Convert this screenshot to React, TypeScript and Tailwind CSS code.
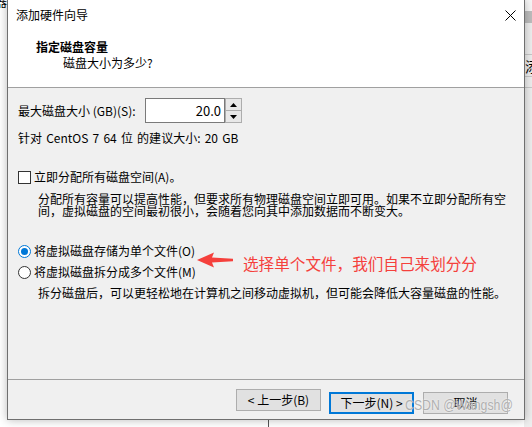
import React from 'react';

const FONT = "font-['Noto_Sans_CJK_SC','Noto_Sans_CJK_JP',sans-serif]";

function Radio({ checked }: { checked?: boolean }) {
  return (
    <span
      className={`flex items-center justify-center w-[13px] h-[13px] rounded-full border bg-white ${
        checked ? 'border-[#0078d7]' : 'border-[#333333]'
      }`}
    >
      {checked && <span className="block w-[7px] h-[7px] rounded-full bg-[#0078d7]" />}
    </span>
  );
}

function Arrow() {
  return (
    <svg width="37" height="16" viewBox="0 0 37 16">
      <polygon points="0,8 17,0.5 15,5.5 36,6.8 36,9.2 15,10.5 17,15.5" fill="#f5403c" />
    </svg>
  );
}

function Spinner() {
  return (
    <div className="flex flex-col w-[17px] h-[25px] border border-[#adadad] bg-[#e8e8e8]">
      <div className="flex-1 flex items-center justify-center border-b border-[#adadad]">
        <svg width="7" height="4" viewBox="0 0 7 4">
          <polygon points="0,4 3.5,0 7,4" fill="#000" />
        </svg>
      </div>
      <div className="flex-1 flex items-center justify-center">
        <svg width="7" height="4" viewBox="0 0 7 4">
          <polygon points="0,0 7,0 3.5,4" fill="#000" />
        </svg>
      </div>
    </div>
  );
}

function WizardButton({ label, focused }: { label: string; focused?: boolean }) {
  return (
    <button
      className={`w-[85px] h-[22px] bg-[#e1e1e1] text-[12px] leading-none text-black ${
        focused ? 'border-2 border-[#0078d7]' : 'border border-[#adadad]'
      }`}
    >
      {label}
    </button>
  );
}

export default function App() {
  return (
    <div className={`relative w-[532px] h-[427px] overflow-hidden bg-white ${FONT}`}>
      {/* background app behind the dialog */}
      <span className="absolute left-[-5px] top-[-4px] text-[12px] leading-none text-black">器</span>
      <div className="absolute left-[524px] top-0 w-[8px] h-[427px] bg-[#eeeeee] flex flex-col">
        <div className="h-[11px] bg-[#f7f7f7]" />
        <div className="h-[12px] bg-[#bdbdbd]" />
        <div className="h-[31px]" />
        <div className="h-px bg-[#c8c8c8]" />
        <div className="h-[21px] flex items-center overflow-hidden">
          <span className="text-[14px] leading-none text-black pl-[1px]">添</span>
        </div>
        <div className="h-px bg-[#c8c8c8]" />
        <div className="h-[10px]" />
        <div className="h-px bg-[#c8c8c8]" />
      </div>
      <div className="absolute left-[268px] top-[419px] w-px h-[8px] bg-[#555555]" />

      {/* dialog window */}
      <div className="absolute left-[7px] top-0 w-[518px] h-[420px] flex flex-col border border-t-0 border-[#6f6f6f] bg-[#f0f0f0] shadow-[0_0_9px_rgba(0,0,0,0.28)]">
        <div className="bg-white flex flex-col">
          <div className="h-[30px] flex items-center justify-between pl-[8px] pr-[8px]">
            <span className="text-[12px] leading-none text-black">添加硬件向导</span>
            <svg width="11" height="11" viewBox="0 0 11 11">
              <path d="M0.5 0.5 L10.5 10.5 M10.5 0.5 L0.5 10.5" stroke="#000" strokeWidth="1" />
            </svg>
          </div>
          <div className="h-[57px] pt-[9px] pl-[28px] flex flex-col">
            <span className="text-[12px] leading-[16px] font-bold text-black">指定磁盘容量</span>
            <span className="text-[12px] leading-[16px] text-black pl-[27px]">磁盘大小为多少?</span>
          </div>
        </div>
        <div className="h-px bg-[#a0a0a0]" />

        {/* body */}
        <div className="relative flex-1 flex flex-col pl-[10px] text-[12px] text-black">
          <div className="mt-[10px] h-[25px] flex items-center">
            <span className="w-[127px] leading-[16px]">最大磁盘大小 (GB)(S):</span>
            <div className="w-[80px] h-[25px] border border-[#7a7a7a] bg-white flex items-center justify-end pr-[3px]">
              <span className="leading-none text-[13px]">20.0</span>
            </div>
            <Spinner />
          </div>
          <div className="mt-[7px] leading-[16px] [word-spacing:1.5px]">针对 CentOS 7 64 位 的建议大小: 20 GB</div>

          <div className="mt-[23px] h-[16px] flex items-center gap-[3px]">
            <span className="w-[13px] h-[13px] border border-[#333333] bg-white" />
            <span className="leading-[16px]">立即分配所有磁盘空间(A)。</span>
          </div>
          <div className="mt-[8px] pl-[20px] leading-[12px]">
            分配所有容量可以提高性能，但要求所有物理磁盘空间立即可用。如果不立即分配所有空
            <br />
            间，虚拟磁盘的空间最初很小，会随着您向其中添加数据而不断变大。
          </div>

          <div className="mt-[25px] h-[18px] flex items-center gap-[3px]">
            <Radio checked />
            <span className="leading-[16px]">将虚拟磁盘存储为单个文件(O)</span>
          </div>
          <div className="mt-[3px] h-[18px] flex items-center gap-[3px]">
            <Radio />
            <span className="leading-[16px]">将虚拟磁盘拆分成多个文件(M)</span>
          </div>
          <div className="mt-[4px] pl-[20px] leading-[16px]">
            拆分磁盘后，可以更轻松地在计算机之间移动虚拟机，但可能会降低大容量磁盘的性能。
          </div>

          {/* red annotation */}
          <div className="absolute left-[189px] top-[160px] flex items-center gap-[9px]">
            <Arrow />
            <span className="text-[15.6px] leading-none text-[#f5403c] mt-[8px] whitespace-nowrap">选择单个文件，我们自己来划分分</span>
          </div>
        </div>

        <div className="h-px bg-[#a0a0a0]" />
        <div className="h-[39px] flex items-start justify-end pt-[9px] pr-[16px]">
          <WizardButton label="< 上一步(B)" />
          <div className="ml-[8px]">
            <WizardButton label="下一步(N) >" focused />
          </div>
          <div className="ml-[9px]">
            <WizardButton label="取消" />
          </div>
        </div>
      </div>

      {/* watermark */}
      <span className="absolute left-[405px] top-[396px] whitespace-nowrap origin-left scale-x-[0.82] text-[15px] leading-[18px] text-[#b0b0b0] font-['Liberation_Sans',sans-serif] [text-shadow:0_0_2px_#ffffff]">
        CSDN @Wangsh@
      </span>
    </div>
  );
}
